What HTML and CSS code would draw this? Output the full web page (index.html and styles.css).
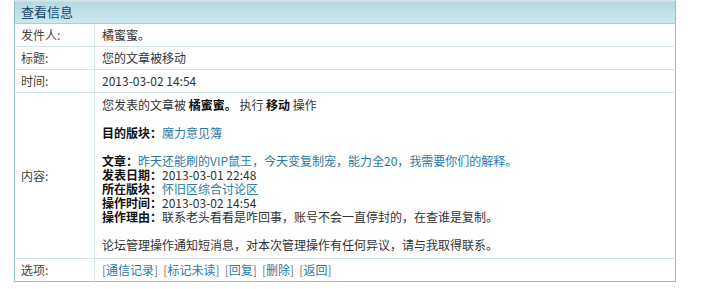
FILE: index.html
```html
<!DOCTYPE html>
<html lang="zh-CN">
<head>
    <meta charset="UTF-8">
    <title>查看信息</title>
    <link rel="stylesheet" href="styles.css">
</head>
<body>
    <table class="msg">
        <tr>
            <th colspan="2" class="head">查看信息</th>
        </tr>
        <tr>
            <td class="label">发件人:</td>
            <td class="value">橘蜜蜜。</td>
        </tr>
        <tr>
            <td class="label">标题:</td>
            <td class="value">您的文章被移动</td>
        </tr>
        <tr>
            <td class="label">时间:</td>
            <td class="value">2013-03-02 14:54</td>
        </tr>
        <tr>
            <td class="label">内容:</td>
            <td class="value content">
                您发表的文章被 <b>橘蜜蜜。</b> 执行 <b>移动</b> 操作<br><br>
                <b>目的版块：</b><a href="#">魔力意见簿</a><br><br>
                <b>文章：</b><a href="#">昨天还能刷的VIP鼠王，今天变复制宠，能力全20，我需要你们的解释。</a><br>
                <b>发表日期：</b>2013-03-01 22:48<br>
                <b>所在版块：</b><a href="#">怀旧区综合讨论区</a><br>
                <b>操作时间：</b>2013-03-02 14:54<br>
                <b>操作理由：</b>联系老头看看是咋回事，账号不会一直停封的，在查谁是复制。<br><br>
                论坛管理操作通知短消息，对本次管理操作有任何异议，请与我取得联系。
            </td>
        </tr>
        <tr>
            <td class="label">选项:</td>
            <td class="value options">
                [<a href="#">通信记录</a>] [<a href="#">标记未读</a>] [<a href="#">回复</a>] [<a href="#">删除</a>] [<a href="#">返回</a>]
            </td>
        </tr>
    </table>
</body>
</html>
```

FILE: styles.css
```css
body {
    margin: 0;
    padding: 0;
    background-color: #fff;
    font-family: "Noto Sans CJK SC", "Liberation Sans", sans-serif;
    font-size: 12px;
    color: #333;
}

.msg {
    margin-left: 14px;
    width: 662px;
    border-collapse: collapse;
    border: 1px solid #8fbdc8;
}

.msg td,
.msg th {
    padding: 0 0 0 6px;
    line-height: 14px;
    border-top: 1px solid #d5e5e8;
    vertical-align: middle;
    text-align: left;
}

.head {
    height: 22px;
    font-weight: normal;
    font-size: 13px;
    color: #1b4766;
    background: linear-gradient(#b4d9e1, #cbe9ee);
    border-bottom: 1px solid #a9d0d8;
}

.label {
    width: 73px;
    height: 22px;
    color: #44443c;
    border-right: 1px solid #d5e5e8;
}

.value {
    padding-left: 7px !important;
    color: #333;
}

.content {
    padding-top: 5px !important;
    padding-bottom: 6px !important;
}

.content b {
    color: #111;
}

.msg a {
    color: #2b7aa5;
    text-decoration: none;
}

.options {
    color: #777;
    word-spacing: 2.5px;
}
```
